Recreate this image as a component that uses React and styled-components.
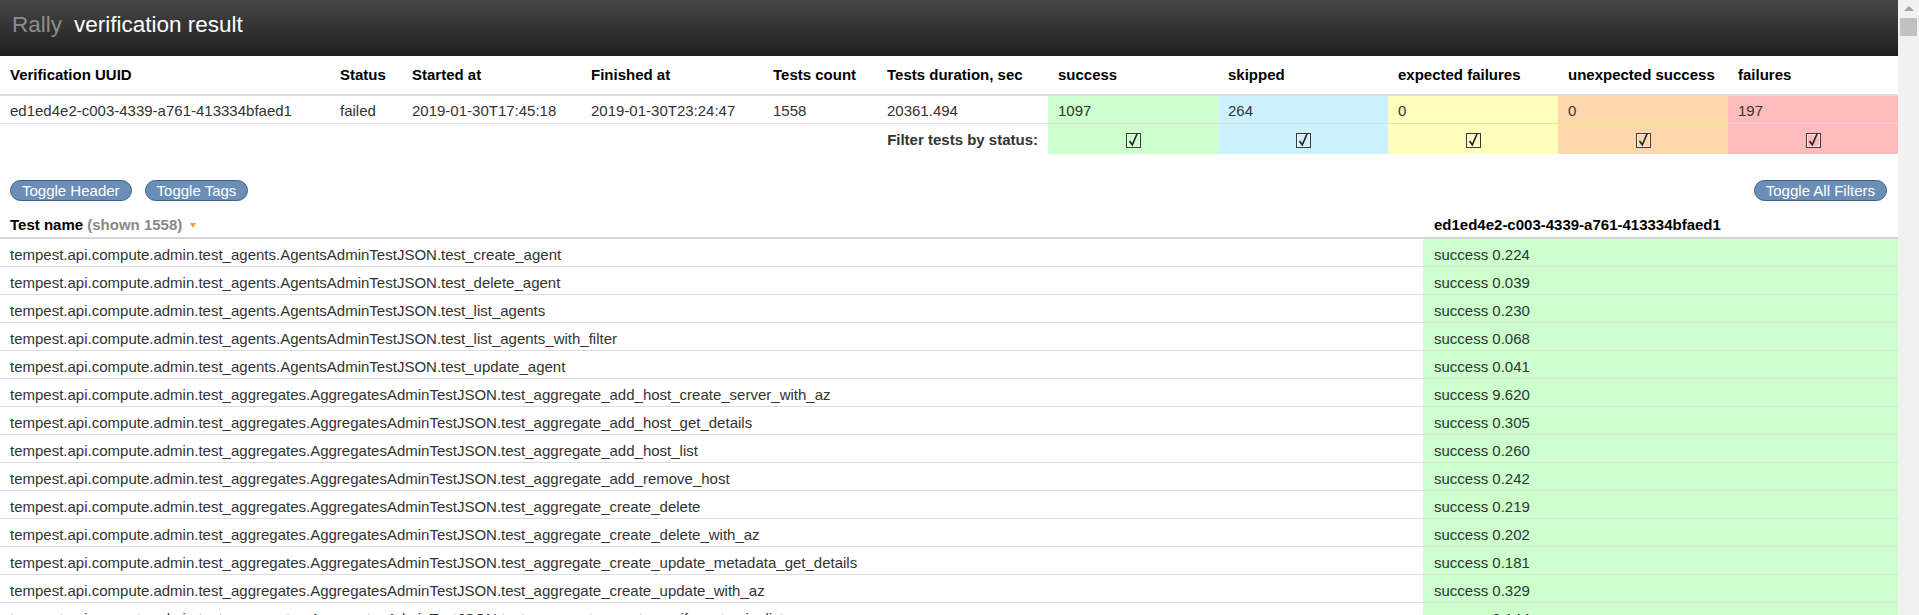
import React from "react";
import styled, { createGlobalStyle } from "styled-components";

const GlobalStyle = createGlobalStyle`
  html, body {
    margin: 0;
    padding: 0;
    overflow: hidden;
  }
  body {
    font-family: "Liberation Sans", Arial, sans-serif;
    font-size: 15px;
    color: #333;
    background: #fff;
  }
`;

const STATUS_BG = {
  success: "#ccffcc",
  skip: "#ccf2ff",
  xfail: "#ffffbb",
  uxsuccess: "#ffd6ad",
  fail: "#ffbbbb",
};

const Frame = styled.div`
  display: flex;
  height: 615px;
`;

const Page = styled.div`
  flex: 1;
  min-width: 0;
  overflow: hidden;
`;

const ScrollTrack = styled.div`
  width: 21px;
  flex-shrink: 0;
  background: #f1f1f1;
  display: flex;
  flex-direction: column;
  align-items: center;
`;

const ScrollArrow = styled.div`
  margin-top: 6px;
  width: 0;
  height: 0;
  border-left: 5px solid transparent;
  border-right: 5px solid transparent;
  border-bottom: 5px solid #a3a3a3;
`;

const ScrollThumb = styled.div`
  margin-top: 7px;
  width: 17px;
  height: 18px;
  background: #c1c1c1;
`;

const TopBar = styled.header`
  height: 56px;
  box-sizing: border-box;
  padding: 0 12px 7px;
  display: flex;
  align-items: center;
  gap: 12px;
  background: linear-gradient(#474747, #1e1e1e);
  font-size: 22.5px;
`;

const Brand = styled.span`
  color: #8e8e8e;
`;

const Title = styled.span`
  color: #fff;
`;

const Table = styled.table`
  width: 100%;
  border-collapse: collapse;
  table-layout: fixed;
`;

const Col = styled.col`
  width: ${(p) => p.$w}px;
`;

const HeadCell = styled.th`
  text-align: left;
  font-weight: bold;
  color: #000;
  padding: 10px 10px;
  line-height: 18px;
  border-bottom: 2px solid #ddd;
  white-space: nowrap;
`;

const Cell = styled.td`
  padding: 6px 10px 4px;
  line-height: 17px;
  border-bottom: 1px solid #ddd;
  white-space: nowrap;
  background: ${(p) => (p.$status ? STATUS_BG[p.$status] : "transparent")};
`;

const FilterLabel = styled.td`
  padding: 0 10px;
  text-align: right;
  font-weight: bold;
  color: #333;
  height: 30px;
`;

const FilterCell = styled.td`
  text-align: center;
  height: 30px;
  padding: 0;
  background: ${(p) => STATUS_BG[p.$status]};
`;

const Controls = styled.div`
  margin-top: 26px;
  padding: 0 11px 0 10px;
  display: flex;
  align-items: center;
`;

const Button = styled.button`
  height: 21px;
  padding: 0 11px;
  border: 1px solid #3f5f86;
  border-radius: 11px;
  background: #6b8eb7;
  color: #fff;
  font-family: "Liberation Sans", Arial, sans-serif;
  font-size: 15px;
  line-height: 19px;
  margin-right: ${(p) => (p.$last ? 0 : 13)}px;
  margin-left: ${(p) => (p.$push ? "auto" : 0)};
  cursor: pointer;
`;

const TestsTable = styled(Table)`
  margin-top: 11px;
`;

const TestHead = styled.th`
  text-align: left;
  font-weight: bold;
  color: #000;
  padding: 4px 10px 4px ${(p) => (p.$right ? 11 : 10)}px;
  line-height: 17px;
  border-bottom: 2px solid #d6d6d6;
  white-space: nowrap;
`;

const Shown = styled.span`
  color: #888;
`;

const SortMark = styled.span`
  display: inline-block;
  margin-left: 8px;
  vertical-align: 2px;
  width: 0;
  height: 0;
  border-left: 3px solid transparent;
  border-right: 3px solid transparent;
  border-top: 5px solid #f5a02a;
`;

const TestCell = styled.td`
  padding: 7px 10px 3px ${(p) => (p.$status ? 11 : 10)}px;
  line-height: 17px;
  border-bottom: 1px solid #ddd;
  white-space: nowrap;
  overflow: hidden;
  background: ${(p) => (p.$status ? STATUS_BG[p.$status] : "transparent")};
`;

const CheckBox = () => (
  <svg width="15" height="16" viewBox="0 0 15 16" style={{ verticalAlign: "middle" }}>
    <rect x="0.5" y="1.5" width="14" height="14" fill="none" stroke="#3a3a3a" />
    <rect x="1.5" y="2.5" width="12" height="12" fill="none" stroke="#ffffff" strokeOpacity="0.6" />
    <path d="M3.5 9 L6.3 12.8 L11.2 1.5" fill="none" stroke="#222" strokeWidth="1.6" />
  </svg>
);

const UUID = "ed1ed4e2-c003-4339-a761-413334bfaed1";

const statuses = [
  { key: "success", label: "success", count: 1097 },
  { key: "skip", label: "skipped", count: 264 },
  { key: "xfail", label: "expected failures", count: 0 },
  { key: "uxsuccess", label: "unexpected success", count: 0 },
  { key: "fail", label: "failures", count: 197 },
];

const AG = "tempest.api.compute.admin.test_agents.AgentsAdminTestJSON.";
const AGG = "tempest.api.compute.admin.test_aggregates.AggregatesAdminTestJSON.";

const tests = [
  [AG + "test_create_agent", "0.224"],
  [AG + "test_delete_agent", "0.039"],
  [AG + "test_list_agents", "0.230"],
  [AG + "test_list_agents_with_filter", "0.068"],
  [AG + "test_update_agent", "0.041"],
  [AGG + "test_aggregate_add_host_create_server_with_az", "9.620"],
  [AGG + "test_aggregate_add_host_get_details", "0.305"],
  [AGG + "test_aggregate_add_host_list", "0.260"],
  [AGG + "test_aggregate_add_remove_host", "0.242"],
  [AGG + "test_aggregate_create_delete", "0.219"],
  [AGG + "test_aggregate_create_delete_with_az", "0.202"],
  [AGG + "test_aggregate_create_update_metadata_get_details", "0.181"],
  [AGG + "test_aggregate_create_update_with_az", "0.329"],
  [AGG + "test_aggregate_create_verify_entry_in_list", "0.144"],
];

const colWidths = [330, 72, 179, 182, 114, 171, 170, 170, 170, 170, 170];

export default function App() {
  return (
    <Frame>
      <GlobalStyle />
      <Page>
        <TopBar>
          <Brand>Rally</Brand>
          <Title>verification result</Title>
        </TopBar>

        <Table>
          <colgroup>
            {colWidths.map((w, i) => (
              <Col key={i} $w={w} />
            ))}
          </colgroup>
          <thead>
            <tr>
              <HeadCell>Verification UUID</HeadCell>
              <HeadCell>Status</HeadCell>
              <HeadCell>Started at</HeadCell>
              <HeadCell>Finished at</HeadCell>
              <HeadCell>Tests count</HeadCell>
              <HeadCell>Tests duration, sec</HeadCell>
              {statuses.map((s) => (
                <HeadCell key={s.key}>{s.label}</HeadCell>
              ))}
            </tr>
          </thead>
          <tbody>
            <tr>
              <Cell>{UUID}</Cell>
              <Cell>failed</Cell>
              <Cell>2019-01-30T17:45:18</Cell>
              <Cell>2019-01-30T23:24:47</Cell>
              <Cell>1558</Cell>
              <Cell>20361.494</Cell>
              {statuses.map((s) => (
                <Cell key={s.key} $status={s.key}>
                  {s.count}
                </Cell>
              ))}
            </tr>
            <tr>
              <FilterLabel colSpan={6}>Filter tests by status:</FilterLabel>
              {statuses.map((s) => (
                <FilterCell key={s.key} $status={s.key}>
                  <CheckBox />
                </FilterCell>
              ))}
            </tr>
          </tbody>
        </Table>

        <Controls>
          <Button>Toggle Header</Button>
          <Button>Toggle Tags</Button>
          <Button $push $last>
            Toggle All Filters
          </Button>
        </Controls>

        <TestsTable>
          <colgroup>
            <Col $w={1423} />
            <Col $w={475} />
          </colgroup>
          <thead>
            <tr>
              <TestHead>
                Test name <Shown>(shown 1558)</Shown>
                <SortMark />
              </TestHead>
              <TestHead $right>{UUID}</TestHead>
            </tr>
          </thead>
          <tbody>
            {tests.map(([name, dur]) => (
              <tr key={name}>
                <TestCell>{name}</TestCell>
                <TestCell $status="success">success {dur}</TestCell>
              </tr>
            ))}
          </tbody>
        </TestsTable>
      </Page>
      <ScrollTrack>
        <ScrollArrow />
        <ScrollThumb />
      </ScrollTrack>
    </Frame>
  );
}
